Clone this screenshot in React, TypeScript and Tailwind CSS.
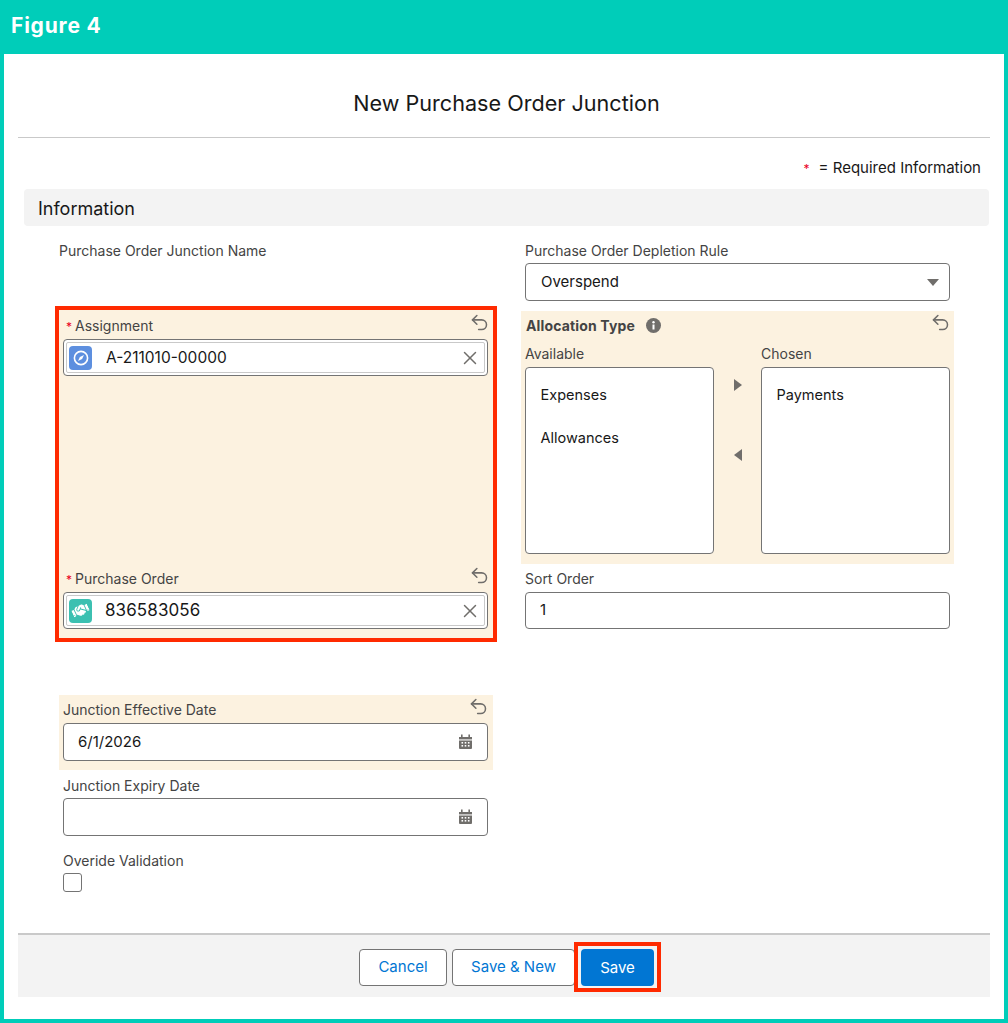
import { Undo2, X } from "lucide-react";
import { FaHandshake } from "react-icons/fa";

const Revert = () => <Undo2 size={21} strokeWidth={1.75} className="text-[#706e6b] shrink-0 -mr-[1px] -translate-y-[3px]" />;

const Calendar = () => (
  <svg width="15" height="16" viewBox="0 0 15 16" className="shrink-0">
    <rect x="3" y="0.5" width="1.6" height="3" fill="#706e6b" />
    <rect x="10.4" y="0.5" width="1.6" height="3" fill="#706e6b" />
    <path d="M1 3h13v2.4H1z" fill="#706e6b" />
    <path d="M1 6.4h13V14a1 1 0 0 1-1 1H2a1 1 0 0 1-1-1z" fill="#706e6b" />
    <g fill="#fff">
      <rect x="3.5" y="8" width="1.6" height="1.6" />
      <rect x="6.7" y="8" width="1.6" height="1.6" />
      <rect x="9.9" y="8" width="1.6" height="1.6" />
      <rect x="3.5" y="11" width="1.6" height="1.6" />
      <rect x="6.7" y="11" width="1.6" height="1.6" />
      <rect x="9.9" y="11" width="1.6" height="1.6" />
    </g>
  </svg>
);

const InfoDot = () => (
  <svg width="15" height="15" viewBox="0 0 15 15">
    <circle cx="7.5" cy="7.5" r="7.5" fill="#706e6b" />
    <rect x="6.5" y="6.5" width="2" height="5" fill="#fff" />
    <circle cx="7.5" cy="4.3" r="1.2" fill="#fff" />
  </svg>
);

const Compass = () => (
  <svg width="16" height="16" viewBox="0 0 16 16" fill="none">
    <circle cx="8" cy="8" r="6.6" stroke="#fff" strokeWidth="1.6" />
    <path d="M11 5 9.1 9.1 5 11 6.9 6.9z" fill="#fff" />
  </svg>
);

const Lookup = ({ tile, icon, value, valueClass }: { tile: string; icon: React.ReactNode; value: string; valueClass: string }) => (
  <div className="h-[37px] mr-[1px] rounded-[4px] border border-[#747474] bg-white p-[2px] flex">
    <div className="flex-1 flex items-center border border-[#c9c9c9] rounded-[2px] pl-[2px] pr-[3px]">
      <div className={`w-[23px] h-[24px] rounded-[4px] flex items-center justify-center ${tile}`}>{icon}</div>
      <span className={`flex-1 text-[#181818] ${valueClass}`}>{value}</span>
      <X size={22} strokeWidth={1.6} className="text-[#706e6b]" />
    </div>
  </div>
);

const Field = ({ label, required }: { label: string; required?: boolean }) => (
  <div className="h-[17px] flex items-center justify-between">
    <span className="text-[14px] text-[#444444] leading-[17px]">
      {required && <span className="text-[#ea001e] text-[12px] ml-[3px] mr-[3px]">*</span>}
      {label}
    </span>
    {required && <Revert />}
  </div>
);

const DateInput = ({ value }: { value?: string }) => (
  <div className="h-[38px] rounded-[4px] border border-[#747474] bg-white flex items-center justify-between pl-[14px] pr-[14px]">
    <span className="text-[15px] text-[#181818]">{value}</span>
    <Calendar />
  </div>
);

const ListBox = ({ items }: { items: string[] }) => (
  <div className="w-[189px] h-[187px] rounded-[4px] border border-[#747474] bg-white pl-[14.5px] pt-[17px] flex flex-col gap-[24px]">
    {items.map((item) => (
      <div key={item} className="text-[14.5px] text-[#181818] leading-[19px]">{item}</div>
    ))}
  </div>
);

export default function App() {
  return (
    <div className="w-[1008px] h-[1023px] bg-[#00cdb9] flex flex-col font-[Inter,sans-serif]">
      <div className="h-[54px] flex items-center pl-[11px] pb-[2px] text-[21px] font-bold tracking-[0.8px] text-white">Figure 4</div>
      <div className="flex-1 mx-[4px] mb-[4px] bg-white px-[14px] flex flex-col">
        <div className="h-[84px] border-b border-[#c9c9c9] flex items-center justify-center pt-[15px] pl-[5px]">
          <h1 className="text-[21.6px] text-[#181818] font-normal">New Purchase Order Junction</h1>
        </div>

        <div className="h-[51px] flex items-center justify-end pr-[9px] pt-[10px] text-[15px] text-[#181818]">
          <span className="text-[#ea001e] text-[12px] mr-[9px]">*</span>= Required Information
        </div>

        <div className="ml-[6px] mr-[1px] h-[37px] rounded-[4px] bg-[#f3f3f3] flex items-center pl-[14px] pt-[1px] text-[18px] text-[#181818]">
          Information
        </div>

        <div className="flex flex-1 ml-[37px]">
          {/* left column */}
          <div className="w-[442px] flex flex-col">
            <div className="h-[80px] pt-[16px] pl-[4px]">
              <Field label="Purchase Order Junction Name" />
            </div>
            <div className="h-[336px] border-[4px] border-[#ff2a00] bg-[#fcf2e0] px-[4px] pt-[7px] flex flex-col justify-between pb-[9px]">
              <div>
                <div className="mb-[5px]"><Field label="Assignment" required /></div>
                <Lookup tile="bg-[#5d8fdf]" icon={<Compass />} value="A-211010-00000" valueClass="pl-[14px] text-[15.5px]" />
              </div>
              <div>
                <div className="mb-[5px]"><Field label="Purchase Order" required /></div>
                <Lookup tile="bg-[#3cc0b1]" icon={<FaHandshake size={17} color="#fff" className="-rotate-[25deg]" />} value="836583056" valueClass="pl-[13px] pt-[1px] text-[17px] tracking-[0.1px]" />
              </div>
            </div>

            <div className="mt-[53px] ml-[4px] w-[434px] bg-[#fcf2e0] h-[75px] pl-[4px] pr-[5px] pt-[6px]">
              <div className="flex items-center justify-between h-[17px] mb-[5px]">
                <span className="text-[14px] text-[#444444]">Junction Effective Date</span>
                <Revert />
              </div>
              <DateInput value="6/1/2026" />
            </div>

            <div className="ml-[8px] w-[425px] mt-[7px]">
              <div className="mb-[4px]"><Field label="Junction Expiry Date" /></div>
              <DateInput />
              <div className="mt-[16px] mb-[4px]"><Field label="Overide Validation" /></div>
              <div className="w-[19px] h-[19px] rounded-[3px] border border-[#747474] bg-white" />
            </div>
          </div>

          {/* right column */}
          <div className="ml-[24px] w-[433px] flex flex-col">
            <div className="pt-[16px] px-[4px]">
              <div className="mb-[4px]"><Field label="Purchase Order Depletion Rule" /></div>
              <div className="h-[38px] rounded-[4px] border border-[#747474] bg-white flex items-center justify-between pl-[15px] pr-[10px]">
                <span className="text-[15px] text-[#181818]">Overspend</span>
                <svg width="12" height="7" viewBox="0 0 12 7"><path d="M0 0h12L6 7z" fill="#706e6b" /></svg>
              </div>
            </div>

            <div className="mt-[10px] h-[253px] bg-[#fcf2e0] px-[4px] pt-[6px]">
              <div className="h-[17px] flex items-center justify-between mb-[11px]">
                <span className="flex items-center gap-[11px] pl-[1px] text-[14px] tracking-[0.15px] font-bold text-[#444444]">
                  Allocation Type <InfoDot />
                </span>
                <Revert />
              </div>
              <div className="flex justify-between">
                <div>
                  <div className="text-[14px] text-[#444444] leading-[17px] mb-[5px]">Available</div>
                  <ListBox items={["Expenses", "Allowances"]} />
                </div>
                <div className="flex flex-col gap-[58px] pt-[34px]">
                  <svg width="8" height="12" viewBox="0 0 8 12"><path d="M0 0l8 6-8 6z" fill="#706e6b" /></svg>
                  <svg width="8" height="12" viewBox="0 0 8 12"><path d="M8 0L0 6l8 6z" fill="#706e6b" /></svg>
                </div>
                <div>
                  <div className="text-[14px] text-[#444444] leading-[17px] mb-[5px]">Chosen</div>
                  <ListBox items={["Payments"]} />
                </div>
              </div>
            </div>

            <div className="px-[4px] pt-[6px]">
              <div className="mb-[5px]"><Field label="Sort Order" /></div>
              <div className="h-[37px] rounded-[4px] border border-[#747474] bg-white flex items-center pl-[14px] text-[15px] text-[#181818]">1</div>
            </div>
          </div>
        </div>

        <div className="h-[64px] mb-[22px] border-t-2 border-[#c9c9c9] bg-[#f3f3f3] flex items-center justify-center pl-[12px] pt-[2px] text-[15px]">
          <button className="w-[88px] h-[37px] pt-[1px] rounded-[4px] border border-[#747474] bg-white text-[#0176d3]">Cancel</button>
          <button className="ml-[5px] w-[123px] h-[37px] pt-[1px] rounded-[4px] border border-[#747474] bg-white text-[#0176d3]">Save &amp; New</button>
          <div className="-ml-[1px] border-[4px] border-[#ff2a00] px-[3px] pt-[3px] pb-[2px] bg-[#f3f3f3]">
            <button className="block w-[73px] h-[37px] pt-[1px] rounded-[4px] bg-[#0176d3] text-white">Save</button>
          </div>
        </div>
      </div>
    </div>
  );
}
